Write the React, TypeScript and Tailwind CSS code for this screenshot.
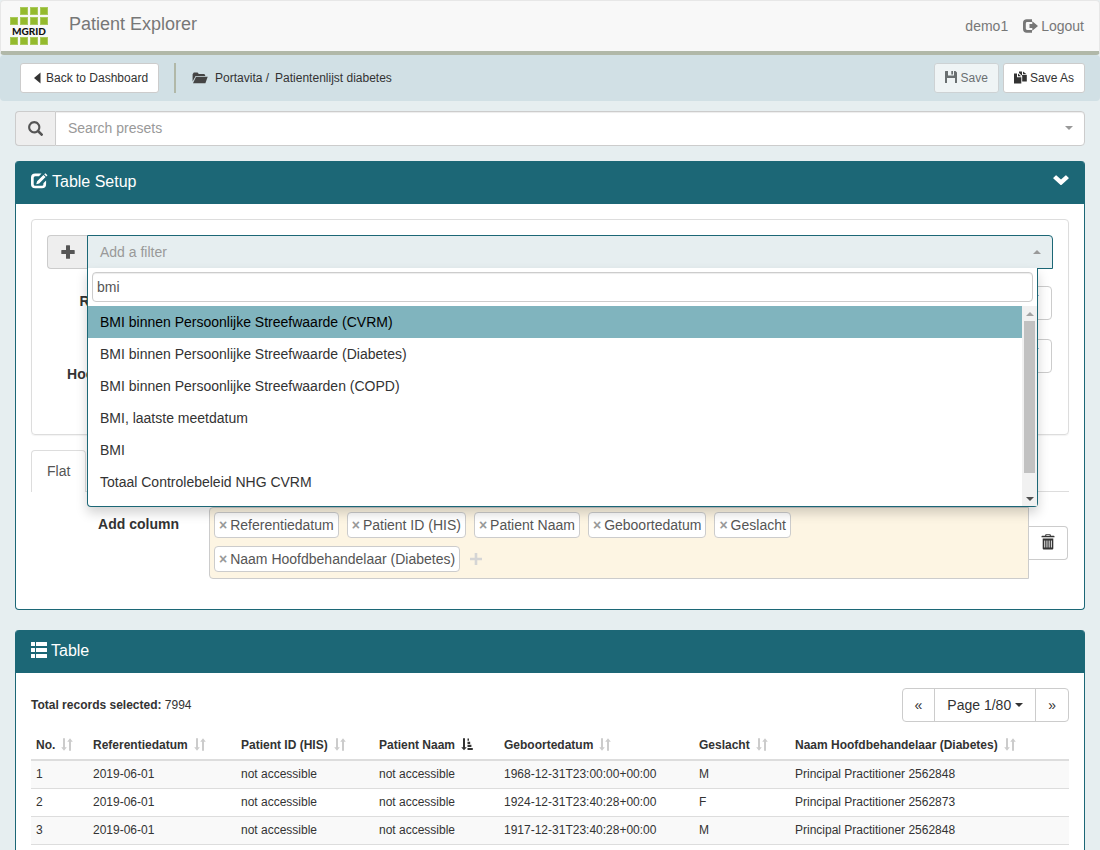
import type { ReactNode } from "react";

type IconProps = { className?: string };

const Glyph = ({ className = "size-4", box = "0 0 16 16", children }: IconProps & { box?: string; children: ReactNode }) => (
  <svg viewBox={box} className={`inline-block shrink-0 fill-current ${className}`} aria-hidden="true">
    {children}
  </svg>
);

const SearchIcon = ({ className }: IconProps) => (
  <Glyph className={className} box="0 0 1200 1200">
    <path
      transform="matrix(1 0 0 -1 0 1200)"
      d="M500 1191q100 0 191 -39t156.500 -104.500t104.500 -156.500t39 -191l-1 -2l1 -5q0 -141 -78 -262l275 -274q23 -26 22.500 -44.500t-22.500 -42.500l-59 -58q-26 -20 -46.500 -20t-39.500 20l-275 274q-119 -77 -261 -77l-5 1l-2 -1q-100 0 -191 39t-156.500 104.500t-104.500 156.500t-39 191t39 191t104.500 156.500t156.500 104.500t191 39zM500 1022q-88 0 -162 -43t-117 -117t-43 -162t43 -162t117 -117t162 -43t162 43t117 117t43 162t-43 162t-117 117t-162 43z"
    />
  </Glyph>
);

const PlusIcon = ({ className }: IconProps) => (
  <Glyph className={className} box="0 0 14 14">
    <path d="M5.500.3h3q.5 0 .5.500V5h4.200q.5 0 .5.500v3q0 .5-.5.500H9v4.200q0 .5-.5.500h-3q-.5 0-.5-.5V9H.8q-.5 0-.5-.5v-3Q.3 5 .8 5H5V.8q0-.5.500-.5z" />
  </Glyph>
);

const ThinPlusIcon = ({ className }: IconProps) => (
  <Glyph className={className} box="0 0 12 12">
    <path d="M4.700 0h2.600v4.700H12v2.600H7.300V12H4.700V7.300H0V4.700h4.700z" />
  </Glyph>
);

const LogoutIcon = ({ className }: IconProps) => (
  <Glyph className={className} box="0 0 15 14">
    <path d="M9 .3H3.800Q0 .3 0 4v6q0 3.700 3.800 3.700H9v-2.800H4.200q-1.400 0-1.400-1.400V4.500q0-1.400 1.400-1.400H9z" />
    <path d="M9.300 2.300L15 7l-5.700 4.700V9H6.500V5h2.800z" />
  </Glyph>
);

const FolderIcon = ({ className }: IconProps) => (
  <Glyph className={className} box="0 0 16 12">
    <path d="M.6 9.500V2.200L1.800.6h3.800l1.200 1.500h5.500l.9 1.200v.6H3.600z" />
    <path d="M4 4.700h11.700L13.400 11.300H1z" />
  </Glyph>
);

const FloppyIcon = ({ className }: IconProps) => (
  <Glyph className={className} box="0 0 12 12">
    <path d="M0 .5Q0 0 .5 0H3v4.500h6V0h1.500L12 1.500v10q0 .5-.5.500H10V7H2v5H.5Q0 12 0 11.500zM6.300 0H8v3.500H6.300z" />
  </Glyph>
);

const CopyIcon = ({ className }: IconProps) => (
  <Glyph className={className} box="0 0 13 13">
    <path d="M0 2.500h3v3.700h4.300V12.500H0zM4 2.500l3.200 2.800H4z" />
    <path d="M5 .4h3v3.700h4.800v6.400H8.200V4.700L5 1.900zM9 .4l3.600 2.900H9z" />
  </Glyph>
);

const EditIcon = ({ className }: IconProps) => (
  <Glyph className={className} box="0 0 17 16">
    <path d="M10.500.5H4.200Q0 .5 0 4.500v6.700q0 4 4.200 4h6.800q4.100 0 4.100-4V7.600l-2.700 2.600v1q0 1.500-1.500 1.500H4.200q-1.500 0-1.500-1.500V4.700q0-1.500 1.500-1.500H8z" />
    <path d="M12.400 1.900l2.200 2.200-6.400 6.300-3 .8.900-3zM14.300.2l2.200 2.100-1.100 1.100-2.200-2.200z" />
  </Glyph>
);

const ChevronDownIcon = ({ className }: IconProps) => (
  <Glyph className={className} box="0 0 16 10">
    <path d="M.4 2.700L2.700.4q.4-.4.800 0L8 4.600 12.500.4q.4-.4.800 0l2.300 2.300q.4.400 0 .8L8.400 9.900q-.4.300-.8 0L.4 3.500q-.4-.4 0-.8z" />
  </Glyph>
);

const ListIcon = ({ className }: IconProps) => (
  <Glyph className={className}>
    {[0, 6, 12].map((y) => (
      <g key={y}>
        <rect x="0" y={y} width="4" height={y === 6 ? 4 : 4} rx=".3" />
        <rect x="5" y={y} width="11" height="4" rx=".3" />
      </g>
    ))}
  </Glyph>
);

const TrashIcon = ({ className }: IconProps) => (
  <Glyph className={className} box="0 0 14 16">
    <path
      fillRule="evenodd"
      d="M4.200 1.800V1q0-.8.800-.8h4q.8 0 .8.800v.8h3q.7 0 .7.700v.8H.5v-.8q0-.7.700-.7zM5.300 1.800h3.400v-.7H5.300z"
    />
    <path fillRule="evenodd" d="M1.700 4.600h10.600v9.900q0 1-1 1H2.700q-1 0-1-1zM3.300 6.600v7h.9v-7zm2.200 0v7h.9v-7zm2.200 0v7h.9v-7zm2.200 0v7h.9v-7z" />
  </Glyph>
);

const SortIcon = ({ className }: IconProps) => (
  <Glyph className={className} box="0 0 12 13">
    <path d="M2 .3h2v8.900h1.800L3 12.700.2 9.200H2zM8 12.700h2V3.800h1.800L9 .3 6.200 3.800H8z" />
  </Glyph>
);

const SortedIcon = ({ className }: IconProps) => (
  <Glyph className={className} box="0 0 12 13">
    <path d="M2 .3h2v8.900h1.800L3 12.300.2 9.200H2zM6.500.6H8v2.200H6.500zM6.500 3.700h2.700v2.200H6.500zM6.500 6.800h3.900V9H6.500zM6.500 9.900h5.300v2.200H6.500z" />
  </Glyph>
);

const Caret = ({ className = "" }: IconProps) => (
  <svg viewBox="0 0 8 4" className={`inline-block h-1 w-2 shrink-0 fill-current ${className}`} aria-hidden="true">
    <path d="M0 0h8L4 4z" />
  </svg>
);

const Logo = () => (
  <svg viewBox="0 0 38 38" className="size-[38px]" role="img" aria-label="MGRID">
    {[0, 10, 30].map((y) =>
      [0, 10, 20, 30]
        .filter((x) => x + y > 0)
        .map((x) => (
          <rect key={`${x}-${y}`} x={x + 0.5} y={y + 0.5} width="7" height="7" fill="#94ba2d" stroke="#a9c95b" />
        )),
    )}
    <text x="19" y="27.500" textAnchor="middle" fontFamily="Lato, sans-serif" fontWeight="900" fontSize="10" fill="#111">
      MGRID
    </text>
  </svg>
);

const options = [
  "BMI binnen Persoonlijke Streefwaarde (CVRM)",
  "BMI binnen Persoonlijke Streefwaarde (Diabetes)",
  "BMI binnen Persoonlijke Streefwaarden (COPD)",
  "BMI, laatste meetdatum",
  "BMI",
  "Totaal Controlebeleid NHG CVRM",
];

const columns = [
  "Referentiedatum",
  "Patient ID (HIS)",
  "Patient Naam",
  "Geboortedatum",
  "Geslacht",
  "Naam Hoofdbehandelaar (Diabetes)",
];

const headers = [
  { label: "No.", width: "w-[57px]" },
  { label: "Referentiedatum", width: "w-[148px]" },
  { label: "Patient ID (HIS)", width: "w-[138px]" },
  { label: "Patient Naam", width: "w-[125px]", sorted: true },
  { label: "Geboortedatum", width: "w-[195px]" },
  { label: "Geslacht", width: "w-[96px]" },
  { label: "Naam Hoofdbehandelaar (Diabetes)", width: "" },
];

const rows = [
  ["1", "2019-06-01", "not accessible", "not accessible", "1968-12-31T23:00:00+00:00", "M", "Principal Practitioner 2562848"],
  ["2", "2019-06-01", "not accessible", "not accessible", "1924-12-31T23:40:28+00:00", "F", "Principal Practitioner 2562873"],
  ["3", "2019-06-01", "not accessible", "not accessible", "1917-12-31T23:40:28+00:00", "M", "Principal Practitioner 2562848"],
];

const smallButton = "flex h-[30px] items-center rounded-[3px] border border-[#ccc] bg-white px-[10px] text-xs";

function Header() {
  return (
    <header className="flex h-[55px] items-center rounded border border-b-4 border-[#e7e7e7] border-b-[#b1b8a8] bg-[#f8f8f8] pr-[15px] pl-[9px] text-[#777]">
      <Logo />
      <a href="#home" className="ml-[21px] pb-1 text-lg leading-5">
        Patient Explorer
      </a>
      <nav className="ml-auto flex items-center gap-[15px]">
        <a href="#user">demo1</a>
        <a href="#logout" className="flex items-center gap-[3px]">
          <LogoutIcon className="h-[14px] w-[15px]" />
          Logout
        </a>
      </nav>
    </header>
  );
}

function Toolbar() {
  return (
    <div className="flex h-[46px] items-center rounded bg-[#d1e0e5] pr-[15px] pl-5 text-xs">
      <button type="button" className={`${smallButton} gap-[5px] pl-[13px]`}>
        <Glyph className="h-3 w-[7px]" box="0 0 7 12">
          <path d="M6.500.5v11L0 6z" />
        </Glyph>
        Back to Dashboard
      </button>
      <div className="ml-[15px] h-[30px] w-[2px] bg-[#b1b8a8]" />
      <FolderIcon className="ml-4 h-3 w-4 text-[#444]" />
      <span className="ml-[7px]">Portavita /</span>
      <span className="ml-[6px]">Patientenlijst diabetes</span>
      <div className="ml-auto flex gap-1">
        <button type="button" disabled className={`${smallButton} gap-1 opacity-65`}>
          <FloppyIcon className="mb-[2px] size-3" />
          Save
        </button>
        <button type="button" className={`${smallButton} gap-[3px]`}>
          <CopyIcon className="mb-[2px] size-[13px]" />
          Save As
        </button>
      </div>
    </div>
  );
}

function FilterPicker() {
  return (
    <div className="flex h-[34px]">
      <span className="flex w-[40px] shrink-0 items-center justify-center rounded-l border border-r-0 border-[#ccc] bg-[#eee] text-[#555]">
        <PlusIcon className="size-[14px]" />
      </span>
      <div className="relative min-w-0 flex-1">
        <button
          type="button"
          className="flex h-[34px] w-full items-center justify-between rounded-tr border border-[#1c6776] bg-[#e6eef0] pr-[11px] pl-3 text-[#999]"
        >
          Add a filter
          <Caret className="rotate-180" />
        </button>
        <div className="absolute top-[33px] right-[15px] left-0 z-10 rounded-b border border-t-0 border-[#1c6776] bg-white shadow-[0_6px_12px_rgba(0,0,0,0.175)]">
          <div className="p-1">
            <input
              type="text"
              aria-label="Filter search"
              defaultValue="bmi"
              className="block h-[30px] w-full rounded border border-[#ccc] px-1 text-[#555] shadow-[inset_0_1px_1px_rgba(0,0,0,0.075)] outline-none"
            />
          </div>
          <div className="flex h-[200px]">
            <ul className="min-w-0 flex-1 overflow-hidden">
              {options.map((option, index) => (
                <li key={option} className={index === 0 ? "bg-[#80b4be] px-3 py-[6px] text-black" : "px-3 py-[6px]"}>
                  {option}
                </li>
              ))}
            </ul>
            <div className="flex w-[15px] flex-col items-center bg-[#f1f1f1]">
              <span className="flex h-[15px] items-center">
                <Caret className="rotate-180 text-[#a3a3a3]" />
              </span>
              <span className="h-[152px] w-[11px] bg-[#c1c1c1]" />
              <span className="mt-auto flex h-[15px] items-center">
                <Caret className="text-[#505050]" />
              </span>
            </div>
          </div>
        </div>
      </div>
    </div>
  );
}

function FieldButton({ label }: { label: string }) {
  return (
    <button
      type="button"
      aria-label={label}
      className="mr-px flex h-[34px] flex-1 items-center justify-end rounded border border-[#ccc] bg-white px-3 text-[#337ab7]"
    >
      <Caret className="mb-3" />
    </button>
  );
}

function PanelTitle({ children }: { children: ReactNode }) {
  return (
    <div className="flex h-[43px] items-center rounded-t-[3px] bg-[#1c6776] px-[15px] pb-[2px] text-base text-white">{children}</div>
  );
}

function SetupPanel() {
  return (
    <section className="mx-[15px] mt-[15px] rounded border border-t-0 border-[#1c6776] bg-white">
      <PanelTitle>
        <h2 className="flex items-center gap-1">
          <EditIcon className="mb-[2px] h-4 w-[17px]" />
          Table Setup
        </h2>
        <button type="button" aria-label="Collapse" className="ml-auto flex">
          <ChevronDownIcon className="mb-1 h-[10px] w-4" />
        </button>
      </PanelTitle>
      <div className="px-[15px] pt-[15px] pb-[30px]">
        <div className="rounded border border-[#ddd] p-[15px] shadow-[0_1px_1px_rgba(0,0,0,0.05)]">
          <FilterPicker />
          <div className="mt-[17px] flex gap-[30px]">
            <span className="w-[143px] pt-[5px] text-right font-bold">Referentiedatum</span>
            <FieldButton label="Referentiedatum" />
          </div>
          <div className="mt-[19px] flex h-20 gap-[30px]">
            <span className="w-[143px] pt-[25px] text-right font-bold">Hoofdbehandeling</span>
            <FieldButton label="Hoofdbehandeling" />
          </div>
        </div>

        <div className="mt-[15px] flex border-b border-[#ddd]">
          <button
            type="button"
            className="-mb-px h-[42px] rounded-t border border-b-0 border-[#ddd] bg-white px-[15px] pb-[2px] text-[#555]"
          >
            Flat
          </button>
        </div>

        <div className="mt-[15px] flex">
          <span className="w-[148px] shrink-0 pt-[7px] text-right font-bold">Add column</span>
          <div className="ml-[30px] flex min-w-0 flex-1 flex-wrap gap-2 rounded-l border border-[#ccc] bg-[#fdf5e3] pt-1 pr-[200px] pb-[6px] pl-1">
            {columns.map((column) => (
              <span key={column} className="flex h-[26px] items-center rounded border border-[#ccc] bg-white px-1 text-[#555]">
                <button type="button" aria-label={`Remove ${column}`} className="mr-[3px] font-bold text-[#999]">
                  ×
                </button>
                {column}
              </span>
            ))}
            <button type="button" aria-label="Add column" className="flex items-center px-[2px] text-[#d5d5d5]">
              <ThinPlusIcon className="size-3" />
            </button>
          </div>
          <button
            type="button"
            aria-label="Delete columns"
            className="mr-px flex h-[34px] w-[39px] items-center justify-center self-center rounded-r border border-l-0 border-[#ccc] bg-white pb-[2px]"
          >
            <TrashIcon className="h-4 w-[14px]" />
          </button>
        </div>
      </div>
    </section>
  );
}

function TablePanel() {
  return (
    <section className="mx-[15px] mt-5 rounded border border-t-0 border-[#1c6776] bg-white">
      <PanelTitle>
        <h2 className="flex items-center gap-1">
          <ListIcon className="mb-[2px] size-4" />
          Table
        </h2>
      </PanelTitle>
      <div className="p-[15px]">
        <div className="flex items-center justify-between">
          <p className="text-xs">
            <strong>Total records selected:</strong> 7994
          </p>
          <div className="flex h-[34px] divide-x divide-[#ccc] rounded border border-[#ccc]">
            <button type="button" aria-label="Previous page" className="px-3">
              «
            </button>
            <button type="button" className="flex items-center gap-1 px-3">
              Page 1/80
              <Caret />
            </button>
            <button type="button" aria-label="Next page" className="px-3">
              »
            </button>
          </div>
        </div>
        <table className="mt-[10px] w-full table-fixed border-collapse text-left text-xs leading-[17px]">
          <thead>
            <tr className="border-b-2 border-[#ddd]">
              {headers.map(({ label, width, sorted }) => (
                <th key={label} className={`p-[5px] whitespace-nowrap ${width}`}>
                  <span className="flex items-center gap-[6px]">
                    {label}
                    {sorted ? (
                      <SortedIcon className="mb-[2px] h-[13px] w-3" />
                    ) : (
                      <SortIcon className="mb-[2px] h-[13px] w-3 text-[#ccc]" />
                    )}
                  </span>
                </th>
              ))}
            </tr>
          </thead>
          <tbody>
            {rows.map((row) => (
              <tr key={row[0]} className="border-b border-[#ddd] odd:bg-[#f9f9f9]">
                {row.map((cell, index) => (
                  <td key={index} className="p-[5px]">
                    {cell}
                  </td>
                ))}
              </tr>
            ))}
          </tbody>
        </table>
      </div>
    </section>
  );
}

export default function App() {
  return (
    <div className="min-h-screen bg-[#e6eef0] font-['Liberation_Sans',Arial,sans-serif] text-sm leading-5 text-[#333]">
      <Header />
      <Toolbar />
      <div className="mx-[15px] mt-[10px] flex h-[35px]">
        <span className="flex w-[40px] shrink-0 items-center justify-center rounded-l border border-r-0 border-[#ccc] bg-[#eee] text-[#555]">
          <SearchIcon className="size-[15px]" />
        </span>
        <button
          type="button"
          className="flex flex-1 items-center justify-between rounded-r border border-[#ccc] bg-white pr-[11px] pb-px pl-3 text-[#999] shadow-[inset_0_1px_1px_rgba(0,0,0,0.075)]"
        >
          Search presets
          <Caret />
        </button>
      </div>
      <SetupPanel />
      <TablePanel />
    </div>
  );
}
